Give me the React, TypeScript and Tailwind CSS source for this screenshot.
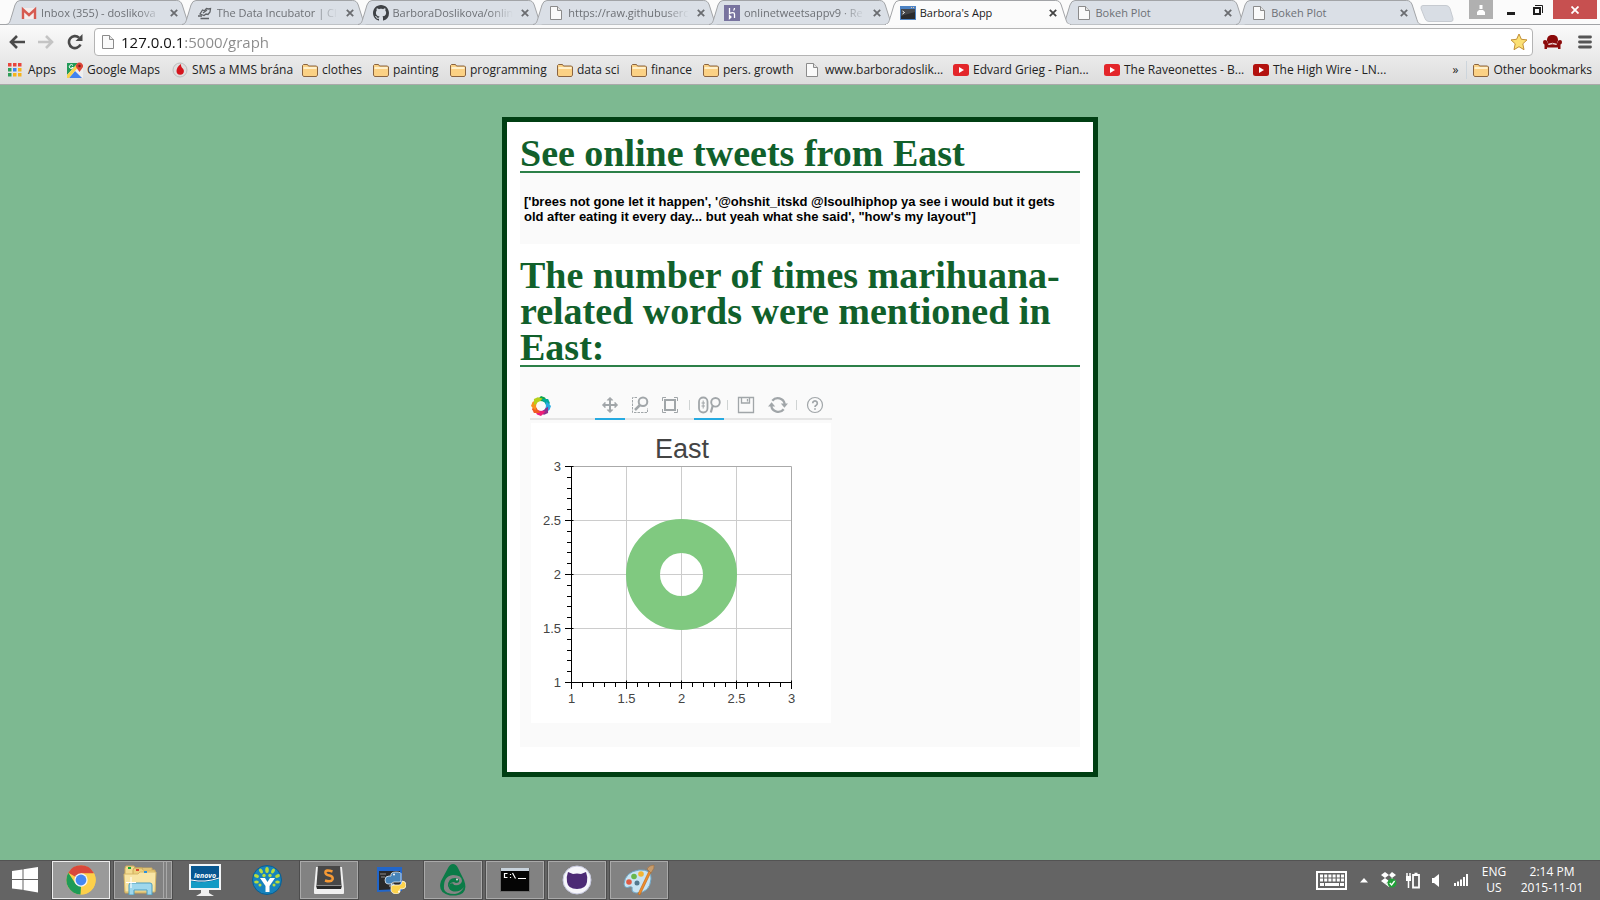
import type { ReactNode } from 'react';

/* ---------- small icons ---------- */

const PageIcon = () => (
  <svg width="14" height="16" viewBox="0 0 14 16" className="shrink-0">
    <path d="M1.5 1.5h7l4 4v9h-11z" fill="#fafafa" stroke="#8b8b8b" />
    <path d="M8.5 1.5v4h4" fill="#e4e4e4" stroke="#8b8b8b" />
  </svg>
);

const GmailIcon = () => (
  <svg width="16" height="16" viewBox="0 0 16 16" className="shrink-0">
    <path d="M1 3h14v11H1z" fill="#f4eceb" />
    <path d="M2 14V4.500l6 5.500 6-5.500V14" fill="none" stroke="#d65a50" strokeWidth="2.4" />
  </svg>
);

const IncubatorIcon = () => (
  <svg width="14" height="14" viewBox="0 0 14 14" className="shrink-0" fill="none" stroke="#5f6266" strokeWidth="1.3">
    <path d="M2 8l2.500-4 2 .8 2-2.300 2 .5 2-.5-.5 3.500-2 2.500-2-.5-2 1.500z" />
    <path d="M5 7l4-3M0 10h4M2.500 12.500H11" />
  </svg>
);

const GithubIcon = () => (
  <svg width="16" height="16" viewBox="0 0 16 16" className="shrink-0" fill="#3f4246">
    <path d="M8 0C3.58 0 0 3.58 0 8c0 3.54 2.29 6.53 5.47 7.59.4.07.55-.17.55-.38 0-.19-.01-.82-.01-1.49-2.01.37-2.53-.49-2.69-.94-.09-.23-.48-.94-.82-1.13-.28-.15-.68-.52-.01-.53.63-.01 1.08.58 1.23.82.72 1.21 1.87.87 2.33.66.07-.52.28-.87.51-1.07-1.78-.2-3.64-.89-3.64-3.95 0-.87.31-1.59.82-2.15-.08-.2-.36-1.02.08-2.12 0 0 .67-.21 2.2.82.64-.18 1.32-.27 2-.27s1.36.09 2 .27c1.53-1.04 2.2-.82 2.2-.82.44 1.1.16 1.92.08 2.12.51.56.82 1.27.82 2.15 0 3.07-1.87 3.75-3.65 3.95.29.25.54.73.54 1.48 0 1.07-.01 1.93-.01 2.2 0 .21.15.46.55.38A8.01 8.01 0 0 0 16 8c0-4.42-3.58-8-8-8z" />
  </svg>
);

const HerokuIcon = () => (
  <svg width="16" height="16" viewBox="0 0 16 16" className="shrink-0">
    <path d="M0 0h16v16H0z" fill="#78739f" />
    <path d="M5.500 3v5.500c2-1 5-1.500 5 .5v4M5.500 10.500v3l1.500-1.500zM10.500 3c0 1.500-.5 2-1 2.500" fill="none" stroke="#fff" strokeWidth="1.300" />
  </svg>
);

const ConsoleIcon = () => (
  <svg width="16" height="14" viewBox="0 0 16 14" className="shrink-0">
    <path d="M0 0h16v14H0z" fill="#4d83c4" />
    <path d="M1 3h14v10H1z" fill="#2a2b2e" />
    <path d="M1 3h14v3L1 10z" fill="#45474b" />
    <path d="M2.500 5l2 1.500-2 1.500" fill="none" stroke="#fff" />
    <path d="M11 1h1v1h-1zM13 1h1v1h-1z" fill="#e7c5a5" />
  </svg>
);

const FolderIcon = () => (
  <svg width="16" height="14" viewBox="0 0 16 14" className="shrink-0">
    <path d="M.5 12V2.500l1-1h4l1 1.500h8l1 1V12l-1 1.500h-13z" fill="#fbd184" stroke="#8a6440" />
    <path d="M1.500 5h13" stroke="#fff0cb" strokeWidth="2" />
  </svg>
);

const AppsIcon = () => (
  <svg width="14" height="14" viewBox="0 0 14 14" className="shrink-0">
    <path d="M0 0h3.500v3.500H0zM5 0h3.500v3.500H5zM10 0h3.500v3.500H10z" fill="#e8453c" />
    <path d="M0 5h3.500v3.500H0z" fill="#2f9e58" />
    <path d="M5 5h3.500v3.500H5z" fill="#3b83f0" />
    <path d="M10 5h3.500v3.500H10zM5 10h3.500v3.500H5zM10 10h3.500v3.500H10z" fill="#f5b41c" />
    <path d="M0 10h3.500v3.500H0z" fill="#2f9e58" />
  </svg>
);

const MapsIcon = () => (
  <svg width="16" height="16" viewBox="0 0 16 16" className="shrink-0">
    <path d="M0 1h16v15H0z" fill="#efefef" />
    <path d="M0 1h11L0 13z" fill="#229a58" />
    <path d="M2 16l6-7 7 7z" fill="#4383ee" />
    <path d="M0 16V13L11 1l2 2L2 16z" fill="#f9d44c" />
    <path d="M12.500 10L9 5a3.600 3.600 0 1 1 7 0z" fill="#db4437" />
    <circle cx="12.500" cy="4" r="1.200" fill="#7b231c" />
    <path d="M6 3.500a2 2 0 1 0 .2 2H4.500" fill="none" stroke="#fff" />
  </svg>
);

const DropIcon = () => (
  <svg width="16" height="16" viewBox="0 0 16 16" className="shrink-0">
    <circle cx="8" cy="8" r="7" fill="#dedede" stroke="#bdbdbd" />
    <path d="M9 2C6 4 4.500 6.500 4.500 9a3.700 3.700 0 0 0 7.400 0C11.900 6 8.500 6 9 2z" fill="#d5141c" />
  </svg>
);

const TubeIcon = ({ dark = false }: { dark?: boolean }) => (
  <svg width="16" height="12" viewBox="0 0 16 12" className="shrink-0">
    <rect width="16" height="12" rx="2.500" fill={dark ? '#b3120f' : '#e3262a'} />
    <path d="M6 3l5 3-5 3z" fill="#fff" />
  </svg>
);

/* ---------- browser chrome ---------- */

type TabInfo = { title: string; icon: ReactNode; active?: boolean; fade?: boolean };

const tabs: TabInfo[] = [
  { title: 'Inbox (355) - doslikova', icon: <GmailIcon />, fade: true },
  { title: 'The Data Incubator | Cl', icon: <IncubatorIcon />, fade: true },
  { title: 'BarboraDoslikova/onlin', icon: <GithubIcon />, fade: true },
  { title: 'https://raw.githubuserc', icon: <PageIcon />, fade: true },
  { title: 'onlinetweetsappv9 · Re', icon: <HerokuIcon />, fade: true },
  { title: "Barbora's App", icon: <ConsoleIcon />, active: true },
  { title: 'Bokeh Plot', icon: <PageIcon /> },
  { title: 'Bokeh Plot', icon: <PageIcon /> },
];

function Tab({ tab }: { tab: TabInfo }) {
  return (
    <div className={`relative flex h-6 min-w-0 flex-1 items-center pt-0.5 ${tab.active ? 'z-10' : ''}`}>
      <svg
        className="absolute top-0 left-0 h-[25px] w-[calc(100%+10px)]"
        viewBox="0 0 186 25"
        preserveAspectRatio="none"
      >
        <path
          d="M0 24.500C4 24 4 21 6 15L9 5Q10.500.5 14 .5H171Q175 .5 176.500 5L180 16C182 22 182 24 186 24.500"
          fill={tab.active ? '#fbfbfb' : '#dadfe6'}
          stroke="#a2a4a7"
        />
        {tab.active && <path d="M1 25h184" stroke="#fbfbfb" strokeWidth="2" />}
      </svg>
      <a href="#tab" className="relative flex min-w-0 flex-1 items-center gap-1 pl-[15px]">
        <span className="flex w-4 shrink-0 justify-center">{tab.icon}</span>
        <span
          className={`min-w-0 flex-1 overflow-hidden whitespace-nowrap text-[11px] leading-5 ${
            tab.active ? 'text-[#1c1c1c]' : 'text-[#6d7075]'
          } ${tab.fade ? '[mask-image:linear-gradient(to_right,black_80%,transparent)]' : ''}`}
        >
          {tab.title}
        </span>
      </a>
      <button aria-label="Close tab" className="relative mr-0.5 ml-1.5 flex size-3 items-center justify-center">
        <svg width="8" height="8" viewBox="0 0 8 8" stroke={tab.active ? '#444' : '#6a6c70'} strokeWidth="1.800">
          <path d="M.8.8l6.400 6.400M7.200.8L.8 7.200" />
        </svg>
      </button>
    </div>
  );
}

function TabStrip() {
  return (
    <div className="flex h-6 bg-[#fbfbfb] pl-1.5">
      <div className="flex min-w-0 flex-1">
        {tabs.map((t, i) => (
          <Tab key={i} tab={t} />
        ))}
      </div>
      <button aria-label="New tab" className="mt-[5px] ml-2 flex h-4 w-9">
        <svg width="34" height="17" viewBox="0 0 34 17">
          <path d="M3 .5h23q3 0 4 3l3 10q.5 3-2 3H9q-3 0-4-3L1 3.500Q.5.5 3 .5z" fill="#d8dde4" stroke="#c6cad0" />
        </svg>
      </button>
      <button aria-label="Profile" className="ml-[13px] flex h-[19px] w-6 items-center justify-center bg-[#b0b0b0]">
        <svg width="10" height="10" viewBox="0 0 10 10" fill="#fff">
          <path d="M3.500 0h3v4h-3zM1 10V7l2-2h4l2 2v3z" />
        </svg>
      </button>
      <button aria-label="Minimize" className="ml-1.5 flex h-[19px] w-6 items-center justify-center pt-2">
        <svg width="8" height="3"><path d="M0 0h8v3H0z" fill="#1e1e1e" /></svg>
      </button>
      <button aria-label="Restore" className="flex h-[19px] w-[30px] items-center justify-center">
        <svg width="10" height="10" viewBox="0 0 10 10" fill="none" stroke="#1e1e1e">
          <path d="M2 .5h7.500V8" />
          <path d="M1 3h6v6H1z" strokeWidth="2" />
        </svg>
      </button>
      <button aria-label="Close" className="mr-[3px] flex h-[19px] w-11 items-center justify-center bg-[#c75050]">
        <svg width="8" height="8" viewBox="0 0 8 8" stroke="#fff" strokeWidth="1.800"><path d="M.5.5l7 7M7.500.5l-7 7" /></svg>
      </button>
    </div>
  );
}

function AddressBar() {
  return (
    <div className="flex h-[34px] items-center border-t border-[#a2a4a7] pt-px pr-2 pl-[9px]">
      <button aria-label="Back" className="w-[29px]">
        <svg width="16" height="14" viewBox="0 0 16 14" fill="none" stroke="#4a4a4a" strokeWidth="2.600"><path d="M16 7H2M8 1L2 7l6 6" /></svg>
      </button>
      <button aria-label="Forward" className="w-[29px]">
        <svg width="16" height="14" viewBox="0 0 16 14" fill="none" stroke="#c4c4c4" strokeWidth="2.600"><path d="M0 7h14M8 1l6 6-6 6" /></svg>
      </button>
      <button aria-label="Reload" className="w-[27px]">
        <svg width="17" height="16" viewBox="0 0 17 16">
          <path d="M13.500 10.500A6 6 0 1 1 12 3.600" fill="none" stroke="#4a4a4a" strokeWidth="2.600" />
          <path d="M15.500 0v7h-7z" fill="#4a4a4a" />
        </svg>
      </button>
      <form className="flex h-7 min-w-0 flex-1 items-center rounded-sm border border-[#b4b4b4] bg-white pr-1 pl-1.5">
        <PageIcon />
        <label className="relative ml-1.5 flex h-6 min-w-0 flex-1 items-center text-[15px]">
          <span className="sr-only">Address</span>
          <input
            type="text"
            defaultValue="127.0.0.1:5000/graph"
            className="w-full bg-[linear-gradient(to_right,#111_62px,#8a8a8a_62px)] bg-clip-text text-transparent outline-none"
          />
        </label>
        <button type="button" aria-label="Bookmark this page">
          <svg width="18" height="18" viewBox="0 0 18 18">
            <path d="M9 1l2.400 5.300 5.600.6-4.200 3.900 1.200 5.900L9 13.700l-5 3 1.200-5.900L1 6.900l5.600-.6z" fill="#fbe074" stroke="#c39037" strokeLinejoin="round" />
          </svg>
        </button>
      </form>
      <button aria-label="Sofa extension" className="ml-2.5">
        <svg width="19" height="15" viewBox="0 0 19 15" fill="#8b0a0a">
          <path d="M4 5.500C4 1.500 6 0 9.500 0S15 1.500 15 5.500L13.500 9h-8z" />
          <path d="M0 7q0-2 2-2t2.500 2l1 3q4-1.500 8 0l1-3Q15 5 17 5t2 2-1.500 2.500V14H15v-1.500H4V14H1.500V9.500Q0 9 0 7z" />
          <path d="M6 9q3.500-1.500 7 0" stroke="#f0d9d9" fill="none" />
        </svg>
      </button>
      <button aria-label="Menu" className="ml-4">
        <svg width="14" height="14" viewBox="0 0 14 14" stroke="#555" strokeWidth="2.800" strokeLinecap="round"><path d="M1.500 2h11M1.500 7h11M1.500 12h11" /></svg>
      </button>
    </div>
  );
}

const bookmarks: { label: string; icon: ReactNode; width: string }[] = [
  { label: 'Apps', icon: <AppsIcon />, width: 'w-[59px]' },
  { label: 'Google Maps', icon: <MapsIcon />, width: 'w-[105px]' },
  { label: 'SMS a MMS brána', icon: <DropIcon />, width: 'w-[130px]' },
  { label: 'clothes', icon: <FolderIcon />, width: 'w-[71px]' },
  { label: 'painting', icon: <FolderIcon />, width: 'w-[77px]' },
  { label: 'programming', icon: <FolderIcon />, width: 'w-[107px]' },
  { label: 'data sci', icon: <FolderIcon />, width: 'w-[74px]' },
  { label: 'finance', icon: <FolderIcon />, width: 'w-[72px]' },
  { label: 'pers. growth', icon: <FolderIcon />, width: 'w-[102px]' },
  { label: 'www.barboradoslik...', icon: <PageIcon />, width: 'w-[148px]' },
  { label: 'Edvard Grieg - Pian...', icon: <TubeIcon />, width: 'w-[151px]' },
  { label: 'The Raveonettes - B...', icon: <TubeIcon />, width: 'w-[149px]' },
  { label: 'The High Wire - LN...', icon: <TubeIcon dark />, width: 'w-[140px]' },
];

function BookmarksBar() {
  return (
    <nav className="flex h-[27px] items-center border-b border-[#a9a9a9] px-2 pb-0.5 text-[12px] text-[#222]">
      {bookmarks.map((b) => (
        <a key={b.label} href="#bookmark" className={`flex shrink-0 items-center gap-1 whitespace-nowrap ${b.width}`}>
          <span className="flex w-4 shrink-0">{b.icon}</span>
          {b.label}
        </a>
      ))}
      <button aria-label="More bookmarks" className="ml-auto pr-2">»</button>
      <a href="#other" className="flex shrink-0 items-center gap-1 border-l border-[#cdd5dc] pl-1.5">
        <FolderIcon />
        Other bookmarks
      </a>
    </nav>
  );
}

/* ---------- plot ---------- */

const petals = ['#0ea54b', '#00a99d', '#29abe2', '#8d2f8d', '#ed1e79', '#f15a24', '#f7931e', '#b5cf1b'];

const BokehLogo = () => (
  <svg width="20" height="20" viewBox="-10 -10 20 20">
    {petals.map((c, i) => (
      <path key={c} d="M-4.500-5.500L0-10 4-8.500 6.500-4.200 2.500-4z" fill={c} transform={`rotate(${i * 45})`} />
    ))}
    <circle r="4.800" fill="#fafafa" />
  </svg>
);

function Tool({ label, active, children }: { label: string; active?: boolean; children: ReactNode }) {
  return (
    <button
      aria-label={label}
      className={`flex h-[30px] w-[30px] items-center justify-center border-b-2 pt-0.5 ${
        active ? 'border-[#26aae1]' : 'border-transparent'
      }`}
    >
      {children}
    </button>
  );
}

const Divider = () => <span className="mx-[3px] mt-2.5 h-2.5 w-px bg-[#cfd3d3]" />;

function PlotToolbar() {
  return (
    <div className="flex w-[302px] border-b-2 border-[#e5e5e5]">
      <a href="#bokeh" aria-label="Bokeh" className="mt-1.5 ml-px w-16">
        <BokehLogo />
      </a>
      <div className="-mb-0.5 flex">
        <Tool label="Pan" active>
          <svg width="18" height="18" viewBox="0 0 18 18" stroke="#a1a6a9" fill="#a1a6a9">
            <path d="M9 3v12M3 9h12" strokeWidth="2" />
            <path d="M9 1.200L6 4.200h6zM9 16.800l-3-3h6zM1.200 9l3-3v6zM16.800 9l-3-3v6z" strokeWidth=".5" />
          </svg>
        </Tool>
        <Tool label="Box Zoom">
          <svg width="18" height="18" viewBox="0 0 18 18" stroke="#a1a6a9" fill="none">
            <path d="M6 1.500H1.500v15h15V12" strokeDasharray="2.500 1" />
            <circle cx="12" cy="5.700" r="4.300" strokeWidth="2" />
            <path d="M9 9l-5 5" strokeWidth="2.500" />
          </svg>
        </Tool>
        <Tool label="Resize">
          <svg width="18" height="18" viewBox="0 0 18 18" stroke="#a1a6a9" fill="none">
            <path d="M4 4h10v10H4z" strokeWidth="2" />
            <path d="M1.500 5V1.500H5M13 1.500h3.500V5M16.500 13v3.500H13M5 16.500H1.500V13" />
          </svg>
        </Tool>
        <span className="w-px" />
        <Divider />
        <span className="w-px" />
        <Tool label="Wheel Zoom" active>
          <svg width="23" height="18" viewBox="0 0 23 18" stroke="#a1a6a9" fill="none">
            <rect x="1" y="1.500" width="8.500" height="15" rx="4.200" strokeWidth="1.800" />
            <path d="M5.200 4.500v8M3.500 7h3.500M3.500 10h3.500" />
            <circle cx="17.500" cy="6.300" r="4.300" strokeWidth="1.900" />
            <path d="M14.800 9.500l-2 7" strokeWidth="2.200" />
          </svg>
        </Tool>
        <Divider />
        <Tool label="Save">
          <svg width="18" height="18" viewBox="0 0 18 18" stroke="#a1a6a9" fill="none">
            <path d="M1.500 1.500h15v15h-15z" strokeWidth="1.300" />
            <path d="M4.500 2v5h8V2M10.500 3v2.500" strokeWidth="1.300" />
          </svg>
        </Tool>
        <span className="w-0.5" />
        <Tool label="Reset">
          <svg width="20" height="18" viewBox="0 0 20 18" stroke="#a1a6a9" fill="none">
            <path d="M4.300 4.800A7 7 0 0 1 16.700 8M15.700 13.200A7 7 0 0 1 3.300 10" strokeWidth="2.200" />
            <path d="M12.800 7.500h7.200l-3.600 4.300zM0 10.500h7.200L3.600 6.200z" fill="#a1a6a9" stroke="none" />
          </svg>
        </Tool>
        <Divider />
        <Tool label="Help">
          <svg width="18" height="18" viewBox="0 0 18 18" stroke="#a1a6a9" fill="none">
            <circle cx="9" cy="9" r="7.500" strokeWidth="1.200" />
            <path d="M6.700 7.200a2.300 2.300 0 1 1 3.500 2Q9 9.800 9 11M9 12.200v1.600" strokeWidth="1.700" />
          </svg>
        </Tool>
      </div>
    </div>
  );
}

const X0 = 40.5;
const Y0 = 259.5;
const W = 220;
const H = 216;
const steps = Array.from({ length: 21 }, (_, i) => i);
const labels = ['1', '1.5', '2', '2.5', '3'];
const snap = (v: number) => Math.floor(v) + 0.5;

function Plot() {
  return (
    <svg width="300" height="300" viewBox="0 0 300 300" className='mt-[3px] ml-px bg-white font-["Liberation_Sans",Arial,sans-serif]'>
      <text x="151" y="35" fontSize="27" textAnchor="middle" fill="#444">East</text>
      <path d={`M${X0} ${Y0 - H}H${X0 + W}V${Y0}`} fill="none" stroke="#aaa" />
      {[1, 2, 3].map((i) => {
        const x = snap(X0 + (W * i) / 4);
        const y = snap(Y0 - (H * i) / 4);
        return <path key={i} d={`M${x} 44V259M41 ${y}H260`} stroke="#ccc" />;
      })}
      <circle cx="150.5" cy="151.5" r="38.500" fill="none" stroke="#80c980" strokeWidth="34" />
      <path d={`M${X0} ${Y0 - H}V${Y0}H${X0 + W}`} fill="none" stroke="#000" />
      {steps.map((i) => {
        const x = snap(X0 + (W * i) / 20);
        const y = snap(Y0 - (H * i) / 20);
        const major = i % 5 === 0;
        return (
          <path
            key={i}
            stroke="#000"
            d={major ? `M${x} 257.500V266M34 ${y}H42.500` : `M${x} 260V264M36 ${y}H40`}
          />
        );
      })}
      {labels.map((l, i) => (
        <g key={l} fontSize="13" fill="#444">
          <text x={X0 + (W * i) / 4} y="280" textAnchor="middle">{l}</text>
          <text x="30" y={snap(Y0 - (H * i) / 4) + 4} textAnchor="end">{l}</text>
        </g>
      ))}
    </svg>
  );
}

/* ---------- page ---------- */

const heading =
  'border-b-2 border-[#2c8048] font-["Liberation_Serif",serif] text-[38px] leading-9 font-bold text-[#11602b]';

function PageContent() {
  return (
    <main className="flex-1 bg-[#7db991] pt-8">
      <div className="mx-auto max-w-[596px] border-[5px] border-[#003f13] bg-white px-[13px] pt-[13px] pb-[25px]">
        <h1 className={heading}>See online tweets from East</h1>
        <p className='mb-[13px] bg-[#fafafa] px-1 pt-[21px] pb-5 font-["Liberation_Sans",Arial,sans-serif] text-[13px] leading-[15px] font-bold text-black'>
          ['brees not gone let it happen', '@ohshit_itskd @lsoulhiphop ya see i would but it gets old after eating it
          every day... but yeah what she said', "how's my layout"]
        </p>
        <h1 className={heading}>
          The number of times marihuana-
          <wbr />
          related words were mentioned in East:
        </h1>
        <div className="bg-[#fafafa] px-2.5 pt-[23px] pb-6">
          <PlotToolbar />
          <Plot />
        </div>
      </div>
    </main>
  );
}

/* ---------- taskbar ---------- */

function Task({ label, framed, active, wide, children }: { label: string; framed?: boolean; active?: boolean; wide?: boolean; children: ReactNode }) {
  const look = active
    ? 'border-[#ececec] bg-[#9a9a9a] outline-[#4d4d4d] outline'
    : framed
      ? 'border-[#a9a9a9] bg-[#828282] outline-[#4d4d4d] outline'
      : 'border-transparent';
  return (
    <button aria-label={label} className={`flex h-[38px] w-[58px] shrink-0 items-center justify-center border ${look}`}>
      {children}
      {wide && <span className="-mr-1 ml-1.5 h-9 w-1 border-x border-[#a9a9a9]" />}
    </button>
  );
}

function Taskbar() {
  return (
    <footer className="flex h-10 items-center bg-[#646464] shadow-[inset_0_1px_0_#535353]">
      <button aria-label="Start" className="flex w-[52px] justify-start pl-[11px]">
        <svg width="28" height="26" viewBox="0 0 28 26" fill="#fff">
          <path d="M1 4l10.500-1.500V12H1zM12.500 2.300L27 0v12H12.500zM1 13h10.500v9.800L1 21.500zM12.500 13H27v12.500l-14.500-2.400z" />
        </svg>
      </button>
      <div className="flex min-w-0 flex-1 gap-1">
        <Task label="Chrome" active>
          <svg width="30" height="30" viewBox="-15 -15 30 30">
            <circle r="14.600" fill="#fdd04a" />
            <path d="M0 0L-12.700-7.300A14.600 14.600 0 0 1 12.700-7.300L12.600-6.500H0z" fill="#d9483b" />
            <path d="M-12.700-7.300L-5.600 3.500 0 6.500-.5 14.600A14.600 14.600 0 0 1-12.700-7.300z" fill="#1f9b57" />
            <path d="M5.600 3.500L-.5 14.600A14.600 14.600 0 0 0 13.200-6.500H0z" fill="#fdd04a" />
            <circle r="6.700" fill="#f5f5f5" />
            <circle r="5.400" fill="#4688f1" />
          </svg>
        </Task>
        <Task label="File Explorer" framed wide>
          <svg width="34" height="30" viewBox="0 0 34 30">
            <path d="M2 3l1-2h8l1 2h17v25H2z" fill="#f3dc92" stroke="#cba858" />
            <path d="M10 5l1-2h8l1 2h12v21H10z" fill="#ecd07b" stroke="#cba858" />
            <path d="M1 9h14l2-2h16l-1 20H2z" fill="#f8e5a5" stroke="#d7b868" />
            <path d="M5 2h3v2H5z" fill="#18a535" /><path d="M13 4h3v2h-3z" fill="#d8442f" /><path d="M21 6h3v2h-3z" fill="#2b91dd" />
            <path d="M6 30V20q0-2 2-2h19q2 0 2 2v10h-5v-5H11v5z" fill="#9ed7ec" stroke="#4d9dbe" />
            <path d="M8 12v11M3 17.500h10" stroke="#fff" />
          </svg>
        </Task>
        <Task label="Lenovo">
          <svg width="34" height="32" viewBox="0 0 34 32">
            <path d="M1 0h32v26H1z" fill="#f2f5f7" /><path d="M3 2h28v22H3z" fill="#075791" />
            <path d="M3 17q14 3 28-2v9H3z" fill="#139bc5" /><path d="M3 16q14 3 28-2" stroke="#fff" fill="none" />
            <text x="17" y="14" fontSize="7" fontWeight="bold" fontStyle="italic" textAnchor="middle" fill="#fff">lenovo</text>
            <path d="M13 26h8v3l5 3H8l5-3z" fill="#eee" />
          </svg>
        </Task>
        <Task label="YNAB">
          <svg width="30" height="30" viewBox="0 0 30 30">
            <circle cx="15" cy="15" r="14.500" fill="#1683bd" stroke="#0a5e91" />
            <path d="M8 13h5l2.500 4 2.500-4h5l-5.500 8v6h-4v-6z" fill="#fff" />
            <g fill="#b9dc3c">
              <ellipse cx="15" cy="5" rx="1.800" ry="3" /><ellipse cx="9" cy="6" rx="1.700" ry="2.700" transform="rotate(-30 9 6)" /><ellipse cx="21" cy="6" rx="1.700" ry="2.700" transform="rotate(30 21 6)" />
              <ellipse cx="4.500" cy="11" rx="2.500" ry="1.700" transform="rotate(25 4.500 11)" /><ellipse cx="25.500" cy="11" rx="2.500" ry="1.700" transform="rotate(-25 25.500 11)" />
              <ellipse cx="4.500" cy="17" rx="2.300" ry="1.500" /><ellipse cx="25.500" cy="17" rx="2.300" ry="1.500" />
              <circle cx="12" cy="10.500" r="1.700" /><circle cx="18" cy="10.500" r="1.700" /><circle cx="8" cy="20" r="1.500" /><circle cx="22" cy="20" r="1.500" />
            </g>
          </svg>
        </Task>
        <Task label="Sublime Text" framed>
          <svg width="30" height="28" viewBox="0 0 30 28">
            <path d="M2 1h26l2 22v4q0 1-1 1H1q-1 0-1-1v-4z" fill="#efefef" />
            <path d="M4 0h22l1.500 19h-25z" fill="#474747" /><path d="M2 19.500h26l-1 3.500H3z" fill="#2a2a2a" />
            <path d="M18.500 5.500Q11 3 11.500 7q.5 2 4 2.500 4 1 3 4-1.500 3-7.500 1" fill="none" stroke="#f79a35" strokeWidth="2.600" />
          </svg>
        </Task>
        <Task label="Python IDLE">
          <svg width="30" height="28" viewBox="0 0 30 28">
            <path d="M1 1h25v24L1 26z" fill="#2266c9" /><path d="M3 5h21v18L3 24z" fill="#292929" />
            <path d="M4 8h6M5 11h4" stroke="#8c8c8c" />
            <path d="M18 18v-2h-6q-3 0-3-4t4-4h2q-1-4 5-4t5 3v5q0 2-2 2h-5q-3 0-3 4h-2" transform="translate(0 2)" fill="#4683b8" stroke="#fff" strokeWidth=".7" />
            <path d="M17 27q-2-1-2-3v-3q0-2 3-2h5q3 0 3-4 4 0 4 4t-4 4h-2q1 5-5 5z" fill="#fcd24c" stroke="#fff" strokeWidth=".7" />
            <circle cx="18" cy="8.500" r="1" fill="#fff" /><circle cx="23" cy="25.500" r="1" fill="#fff" />
          </svg>
        </Task>
        <Task label="Green drop" framed>
          <svg width="28" height="32" viewBox="0 0 28 32">
            <path d="M14 0q3 0 5 4l6 12q5 14-8 15.500H11Q-2 29 2 17L9 4q2-4 5-4z" fill="#0b7b47" />
            <path d="M5 25q-1-13 9-14 9 0 9 6-1 5-8 4-1-3-4-1-3 5 2 7 7 2 12-4-3 6-9 7Q6 30 5 25z" fill="#858585" />
            <path d="M9 22q0-8 7-8 5 0 4 4-3 2-5 0-5 0-5 6z" fill="#0b7b47" />
            <circle cx="18" cy="15.500" r="1" fill="#ddd" />
          </svg>
        </Task>
        <Task label="Command Prompt" framed>
          <svg width="30" height="26" viewBox="0 0 30 26">
            <path d="M0 1h30v24H0z" fill="#6c6c6c" /><path d="M1 1h28v3H1z" fill="#c8d2dc" /><path d="M1 4h28v20H1z" fill="#050505" />
            <path d="M7.500 6.500h-3v4h3M10.500 7v1M10.500 10v1M12.500 6l3 5.500M18 11.500h8" stroke="#fff" fill="none" strokeWidth="1.200" />
          </svg>
        </Task>
        <Task label="GitHub" framed>
          <svg width="30" height="30" viewBox="0 0 30 30">
            <circle cx="15" cy="15" r="14" fill="#f6f6fb" stroke="#c6c8df" />
            <path d="M6 7l5 2q4-1 8 0l5-2q2 5 1 10-1 7-10 7T5 17Q4 12 6 7z" fill="#4c2a75" />
          </svg>
        </Task>
        <Task label="Paint" framed>
          <svg width="32" height="32" viewBox="0 0 32 32">
            <path d="M1 20Q2 8 16 6q13-1 12 9-1 14-15 14-5-1-4-4 1-3-3-2-4 2-5-3z" fill="#c9e4f3" stroke="#6fa7c6" />
            <circle cx="6" cy="18" r="2.800" fill="#e05b43" /><circle cx="11" cy="12.500" r="2.800" fill="#69b84c" /><circle cx="18" cy="10" r="2.800" fill="#f2b434" /><circle cx="14" cy="19" r="2.500" fill="#52788e" />
            <path d="M26 7l2 1-11 23-2-1z" fill="#ee8d2c" stroke="#bd6518" strokeWidth=".6" />
            <path d="M24 5q2-4 7-4 1 3-3 8z" fill="#c79b6b" stroke="#93673b" strokeWidth=".5" />
          </svg>
        </Task>
      </div>
      <div className="flex shrink-0 items-center text-center text-[12px] leading-4 text-white">
        <button aria-label="Keyboard" className="mr-3">
          <svg width="31" height="19" viewBox="0 0 31 19" fill="none" stroke="#fff">
            <path d="M1 1h29v17H1z" strokeWidth="2" />
            <path d="M4 5h24M4 9h24" strokeWidth="3" strokeDasharray="3 1.200" /><path d="M4 13.500h4M9 13.500h14M24 13.500h4" strokeWidth="3" />
          </svg>
        </button>
        <button aria-label="Show hidden icons" className="mr-3">
          <svg width="10" height="6" viewBox="0 0 10 6"><path d="M1 5.500L5 1l4 4.500z" fill="#fff" /></svg>
        </button>
        <svg width="16" height="16" viewBox="0 0 16 16" className="mr-2">
          <path d="M4 0l4 3-4 3-4-3zM11 0l4 3-4 3-3-3zM4 6l4 3-4 3-4-3zM11 6l4 3-4 3-3-3zM4 12l4-2 4 2-4 3z" fill="#fff" />
          <circle cx="11" cy="11" r="4.500" fill="#21a038" /><path d="M8.800 11l1.800 2 3-4" fill="none" stroke="#fff" strokeWidth="1.300" />
        </svg>
        <svg width="16" height="17" viewBox="0 0 16 17" className="mr-2.5" fill="none" stroke="#fff">
          <path d="M8 3h6v12.500H8z" strokeWidth="1.800" /><path d="M9.500 1.500h3M2 1v4M5 1v4M3.500 9v7" strokeWidth="1.500" /><path d="M1 4h5v5H1z" fill="#fff" stroke="none" />
        </svg>
        <svg width="10" height="15" viewBox="0 0 10 15" className="mr-3" fill="#fff"><path d="M1 5h2l5-4v13l-5-4H1z" /></svg>
        <svg width="17" height="12" viewBox="0 0 17 12" fill="#fff"><path d="M1 9h2v3H1zM4 7.500h2V12H4zM7 5.500h2V12H7zM10 3h2v9h-2zM13 0h2v12h-2z" /></svg>
        <div className="ml-2.5 w-7">ENG<br />US</div>
        <div className="mr-4 ml-3 w-16 whitespace-nowrap">2:14 PM<br />2015-11-01</div>
      </div>
    </footer>
  );
}

export default function App() {
  return (
    <div className='flex min-h-screen flex-col font-["Open_Sans","Noto_Sans",sans-serif]'>
      <header className="bg-[linear-gradient(#fbfbfb_24px,#dcdcdc)]">
        <TabStrip />
        <AddressBar />
        <BookmarksBar />
      </header>
      <PageContent />
      <Taskbar />
    </div>
  );
}
